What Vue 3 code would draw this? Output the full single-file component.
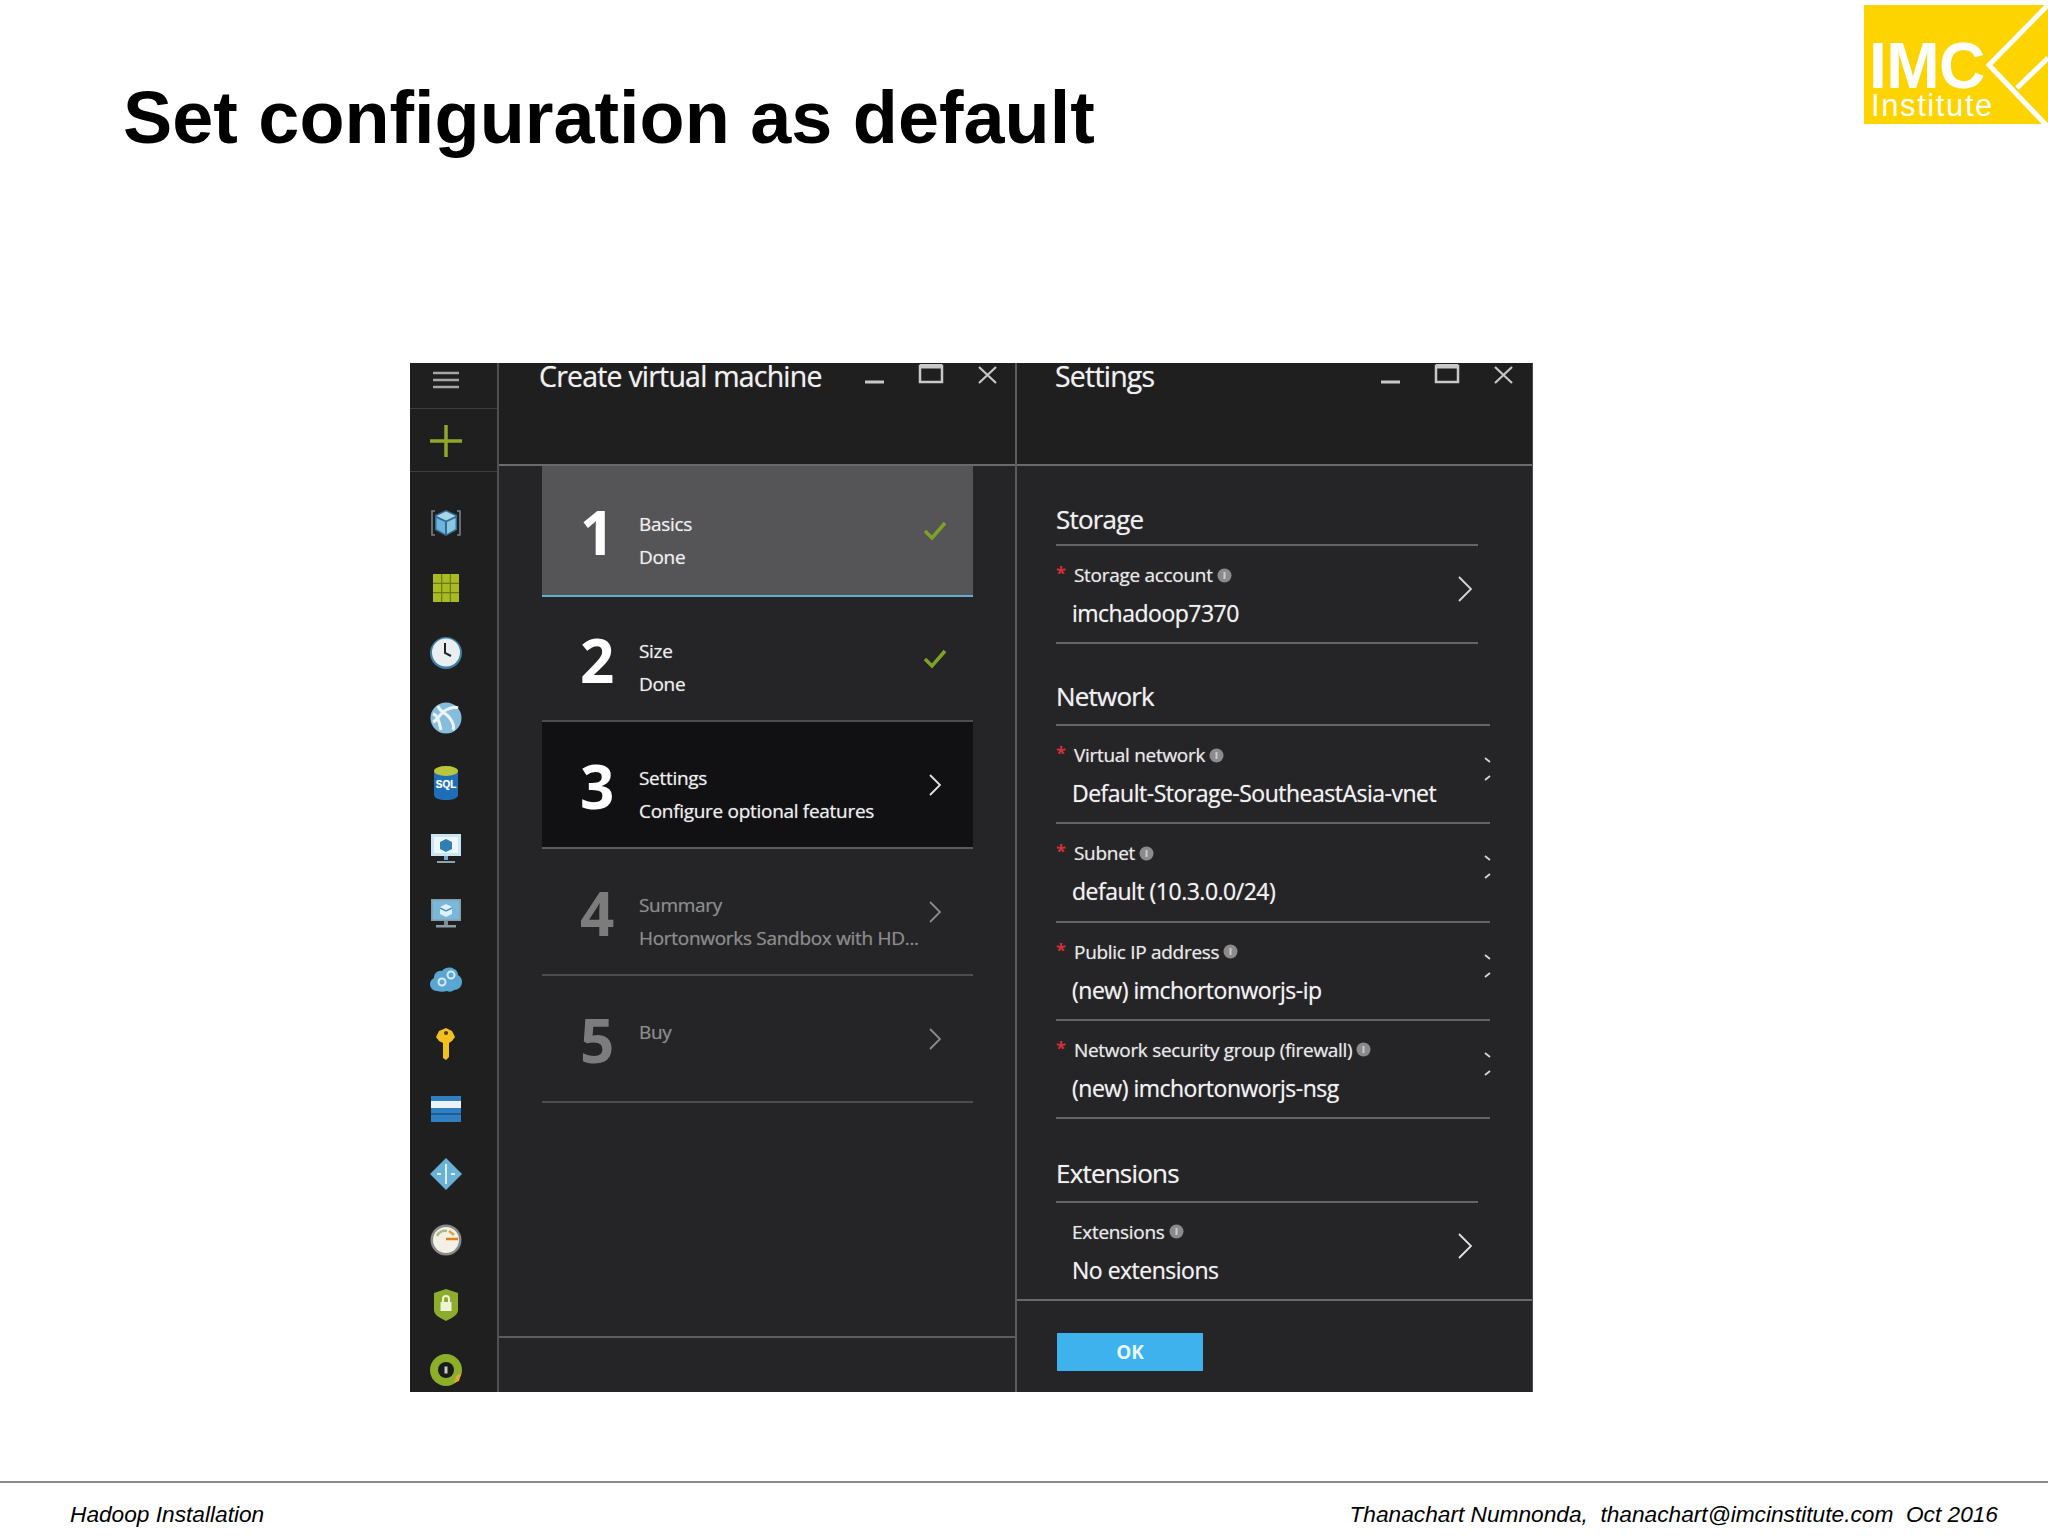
<script setup>
const steps = [
  { n: 1, title: 'Basics', sub: 'Done', cls: 'sel', icon: 'check' },
  { n: 2, title: 'Size', sub: 'Done', cls: '', icon: 'check' },
  { n: 3, title: 'Settings', sub: 'Configure optional features', cls: 'cur', icon: 'chev' },
  { n: 4, title: 'Summary', sub: 'Hortonworks Sandbox with HD...', cls: 'off', icon: 'chev' },
  { n: 5, title: 'Buy', sub: '', cls: 'off', icon: 'chev' }
]
const network = [
  { label: 'Virtual network', value: 'Default-Storage-SoutheastAsia-vnet' },
  { label: 'Subnet', value: 'default (10.3.0.0/24)' },
  { label: 'Public IP address', value: '(new) imchortonworjs-ip' },
  { label: 'Network security group (firewall)', value: '(new) imchortonworjs-nsg' }
]
</script>

<template>
  <div class="page">
    <header class="top">
      <h1 class="title">Set configuration as default</h1>
      <svg class="logo" width="184" height="119" viewBox="0 0 184 119">
        <rect width="184" height="119" fill="#fdd400" />
        <path d="M184 0 L125 60 L184 122 M153 83 L184 53" fill="none" stroke="#fff" stroke-width="5" />
        <text x="5" y="83" class="logo-big">IMC</text>
        <text x="7" y="111" class="logo-small">Institute</text>
      </svg>
    </header>

    <main class="window">
      <nav class="side">
        <div class="side-top">
          <svg width="26" height="18" viewBox="0 0 26 18"><path d="M0 2h26M0 9h26M0 16h26" stroke="#a5a5a5" stroke-width="2.5" /></svg>
        </div>
        <div class="side-add">
          <svg width="32" height="32" viewBox="0 0 32 32"><path d="M16 0v32M0 16h32" stroke="#8fa82a" stroke-width="3.5" /></svg>
        </div>
        <div class="side-list">
          <!-- cube -->
          <div class="ico"><svg width="32" height="32" viewBox="0 0 32 32">
            <path d="M5 4H2v24h3M27 4h3v24h-3" fill="none" stroke="#77808a" stroke-width="1.6" />
            <path d="M16 3l11 5v15l-11 6-11-6V8z" fill="#2f6f96" />
            <path d="M16 4.500l9.500 4.500-9.500 4.500L6.500 9z" fill="#a9d4ea" />
            <path d="M6.500 11l8.500 4v12l-8.500-5z" fill="#6fb4da" /><path d="M25.500 11L17 15v12l8.500-5z" fill="#8cc5e3" />
          </svg></div>
          <!-- grid -->
          <div class="ico"><svg width="26" height="28" viewBox="0 0 26 28">
            <rect width="26" height="28" fill="#a8bb22" />
            <path d="M8.700 0v28M17.300 0v28M0 9.300h26M0 18.600h26" stroke="#6c7a1a" stroke-width="1.200" />
          </svg></div>
          <!-- clock -->
          <div class="ico"><svg width="32" height="32" viewBox="0 0 32 32">
            <circle cx="16" cy="16" r="16" fill="#3f7fa6" /><circle cx="16" cy="15.500" r="14" fill="#e9eef1" />
            <path d="M15 6v10l6 3" fill="none" stroke="#222" stroke-width="2" />
          </svg></div>
          <!-- globe -->
          <div class="ico"><svg width="32" height="32" viewBox="0 0 32 32">
            <circle cx="16" cy="16" r="15.500" fill="#86bddc" />
            <path d="M3 20c5-2 7-9 13-12s10-3 12-2M8 4c2 6 8 7 11 11s6 9 4 13M3 12c5 1 6 8 8 16" fill="none" stroke="#eef5f9" stroke-width="3" />
          </svg></div>
          <!-- sql -->
          <div class="ico"><svg width="24" height="34" viewBox="0 0 24 34">
            <path d="M0 5v24c0 3 5 5 12 5s12-2 12-5V5z" fill="#1e6fb8" />
            <ellipse cx="12" cy="5" rx="12" ry="5" fill="#b7c63a" />
            <text x="12" y="22" class="sql">SQL</text>
          </svg></div>
          <!-- monitor light -->
          <div class="ico"><svg width="30" height="30" viewBox="0 0 30 30">
            <rect width="30" height="22" fill="#c9e6f5" /><rect x="3" y="3" width="24" height="16" fill="#eef7fb" />
            <path d="M15 5l6 3v7l-6 3-6-3V8z" fill="#2f7fb5" />
            <path d="M13 22h4v4h-4z" fill="#6fa9c8" /><path d="M6 27h18v2H6z" fill="#8aa3b0" />
          </svg></div>
          <!-- monitor blue -->
          <div class="ico"><svg width="30" height="30" viewBox="0 0 30 30">
            <rect width="30" height="22" fill="#8a9aa3" /><rect x="1.500" y="1.500" width="27" height="19" fill="#79b8da" />
            <path d="M15 5l6 3v7l-6 3-6-3V8z" fill="#dff0f8" /><path d="M9 9l6 3 6-3" fill="none" stroke="#4f95bd" stroke-width="1.500" />
            <path d="M13 22h4v4h-4z" fill="#7b8b94" /><path d="M5 26h20v2.500H5z" fill="#8e9aa1" />
          </svg></div>
          <!-- cloud gears -->
          <div class="ico"><svg width="32" height="28" viewBox="0 0 32 28">
            <path d="M7 26c-4 0-7-3-7-7 0-3 2-5 4-6 0-5 4-8 8-7 2-3 8-5 12-2 3 1 4 4 4 6 3 2 4 4 4 7 0 5-4 8-8 8-2 2-5 2-7 1-3 1-7 1-10 0z" fill="#5aa6d3" />
            <circle cx="12" cy="17" r="3.500" fill="none" stroke="#d7ebf6" stroke-width="2" /><circle cx="21" cy="10" r="3.500" fill="none" stroke="#d7ebf6" stroke-width="2" />
          </svg></div>
          <!-- key -->
          <div class="ico"><svg width="20" height="32" viewBox="0 0 20 32">
            <path d="M10 0l6 3 3 6-3 4-3 2v14l-3 3-3-2V15L3 13 0 9l3-6z" fill="#f3c11f" />
            <circle cx="10" cy="5" r="2" fill="#4a3a10" />
          </svg></div>
          <!-- card -->
          <div class="ico"><svg width="30" height="26" viewBox="0 0 30 26">
            <rect width="30" height="26" fill="#2f7fc1" /><rect y="5" width="30" height="7" fill="#eaf3fa" />
            <rect y="17" width="30" height="2" fill="#1b5f99" />
          </svg></div>
          <!-- diamond -->
          <div class="ico"><svg width="32" height="32" viewBox="0 0 32 32">
            <path d="M16 0l16 16-16 16L0 16z" fill="#69b2d6" />
            <path d="M16 6v20M7 16h4M21 16h4" stroke="#e2f1f8" stroke-width="2" />
          </svg></div>
          <!-- gauge -->
          <div class="ico"><svg width="32" height="32" viewBox="0 0 32 32">
            <circle cx="16" cy="16" r="15.500" fill="#8a8a8a" /><circle cx="16" cy="16" r="13" fill="#f3f0e4" />
            <path d="M16 15h12" stroke="#e07f22" stroke-width="2.500" />
            <path d="M7 12c2-4 6-6 10-5" fill="none" stroke="#a9b88a" stroke-width="2.500" /><path d="M19 7l5 4" stroke="#d7a24a" stroke-width="2.500" />
          </svg></div>
          <!-- shield -->
          <div class="ico"><svg width="24" height="32" viewBox="0 0 24 32">
            <path d="M12 0l12 4v17c0 5-6 8-12 11C6 29 0 26 0 21V4z" fill="#8dab2c" />
            <rect x="6.500" y="13" width="11" height="9" fill="#eef3d8" /><path d="M9 13v-3a3 3 0 0 1 6 0v3" fill="none" stroke="#eef3d8" stroke-width="2" />
          </svg></div>
          <!-- donut -->
          <div class="ico"><svg width="32" height="32" viewBox="0 0 32 32">
            <circle cx="16" cy="16" r="16" fill="#8cae28" /><path d="M26 22l5-3-2 8-5 2z" fill="#e2a63a" />
            <circle cx="16" cy="16" r="8" fill="#1b1b1c" /><rect x="14.500" y="12.500" width="3" height="7" fill="#c9c9c9" />
          </svg></div>
        </div>
      </nav>

      <section class="panel panel-steps">
        <div class="phead">
          <span class="ptitle">Create virtual machine</span>
          <svg class="ctrl" width="132" height="22" viewBox="0 0 132 22">
            <path d="M0 18h19" stroke="#c8c8c8" stroke-width="3" />
            <path d="M55 2h22v16H55z" fill="none" stroke="#c8c8c8" stroke-width="2.500" /><path d="M55 2h22" stroke="#c8c8c8" stroke-width="5" />
            <path d="M114 3l17 16M131 3l-17 16" stroke="#c8c8c8" stroke-width="2.200" />
          </svg>
        </div>
        <div class="pbody steps">
          <div v-for="s in steps" :key="s.n" class="step" :class="s.cls">
            <span class="num">{{ s.n }}</span>
            <div class="stext">
              <div>{{ s.title }}</div>
              <div class="ssub">{{ s.sub }}</div>
            </div>
            <svg v-if="s.icon === 'check'" class="sico" width="24" height="20" viewBox="0 0 24 20"><path d="M2 10l7 7L22 2" fill="none" stroke="#7fa12a" stroke-width="3.500" /></svg>
            <svg v-else class="sico" width="24" height="24" viewBox="0 0 24 24"><path d="M7 2l10 10L7 22" fill="none" :stroke="s.cls === 'off' ? '#8a8a8a' : '#e2e2e2'" stroke-width="1.800" /></svg>
          </div>
        </div>
        <div class="pfoot"></div>
      </section>

      <section class="panel panel-set">
        <div class="phead">
          <span class="ptitle">Settings</span>
          <svg class="ctrl" width="132" height="22" viewBox="0 0 132 22">
            <path d="M0 18h19" stroke="#c8c8c8" stroke-width="3" />
            <path d="M55 2h22v16H55z" fill="none" stroke="#c8c8c8" stroke-width="2.500" /><path d="M55 2h22" stroke="#c8c8c8" stroke-width="5" />
            <path d="M114 3l17 16M131 3l-17 16" stroke="#c8c8c8" stroke-width="2.200" />
          </svg>
        </div>
        <div class="pbody form">
          <div class="group short first">
            <h2 class="ghead">Storage</h2>
            <div class="row">
              <div class="rtext">
                <div class="rlabel"><i class="req">*</i>Storage account<svg class="info" width="15" height="15" viewBox="0 0 15 15"><circle cx="7.500" cy="7.500" r="7" fill="#8b8b8d" /><path d="M7.500 4v7" stroke="#c9c9c9" stroke-width="2" /></svg></div>
                <div class="rvalue">imchadoop7370</div>
              </div>
              <svg class="big" width="18" height="26" viewBox="0 0 18 26"><path d="M3 1l12 12L3 25" fill="none" stroke="#d6d6d6" stroke-width="1.800" /></svg>
            </div>
          </div>
          <div class="group net">
            <h2 class="ghead">Network</h2>
            <div v-for="r in network" :key="r.label" class="row">
              <div class="rtext">
                <div class="rlabel"><i class="req">*</i>{{ r.label }}<svg class="info" width="15" height="15" viewBox="0 0 15 15"><circle cx="7.500" cy="7.500" r="7" fill="#8b8b8d" /><path d="M7.500 4v7" stroke="#c9c9c9" stroke-width="2" /></svg></div>
                <div class="rvalue">{{ r.value }}</div>
              </div>
              <svg class="tick" width="8" height="24" viewBox="0 0 8 24"><path d="M1 1l5 4M6 19l-5 4" fill="none" stroke="#d6d6d6" stroke-width="1.800" /></svg>
            </div>
          </div>
          <div class="group short ext">
            <h2 class="ghead">Extensions</h2>
            <div class="row last">
              <div class="rtext">
                <div class="rlabel"><i class="req none"></i>Extensions<svg class="info" width="15" height="15" viewBox="0 0 15 15"><circle cx="7.500" cy="7.500" r="7" fill="#8b8b8d" /><path d="M7.500 4v7" stroke="#c9c9c9" stroke-width="2" /></svg></div>
                <div class="rvalue">No extensions</div>
              </div>
              <svg class="big" width="18" height="26" viewBox="0 0 18 26"><path d="M3 1l12 12L3 25" fill="none" stroke="#e2e2e2" stroke-width="1.800" /></svg>
            </div>
          </div>
        </div>
        <div class="sfoot"><button class="ok">OK</button></div>
      </section>
    </main>

    <footer class="foot">
      <span>Hadoop Installation</span>
      <span>Thanachart Numnonda,&nbsp; thanachart@imcinstitute.com&nbsp; Oct 2016</span>
    </footer>
  </div>
</template>

<style>
html, body { margin: 0; background: #fff; }
</style>

<style scoped>
.page { width: 2048px; height: 1536px; display: flex; flex-direction: column; background: #fff; overflow: hidden; font-family: "Liberation Sans", Arial, sans-serif; color: #000; }
.top { height: 363px; display: flex; justify-content: space-between; align-items: flex-start; flex: none; }
.title { margin: 74px 0 0 123px; font-size: 73.8px; line-height: 88px; font-weight: 700; }
.logo { margin-top: 5px; flex: none; }
.logo-big { font-family: "Liberation Sans", sans-serif; font-size: 64px; fill: #fff; font-weight: 700; letter-spacing: -0.5px; }
.logo-small { font-family: "Liberation Sans", sans-serif; font-size: 31px; fill: #fff; letter-spacing: 1.6px; }
.sql { font-family: "Liberation Sans", sans-serif; font-size: 10px; font-weight: 700; fill: #fff; text-anchor: middle; }

.window { margin-left: 410px; width: 1123px; height: 1029px; flex: none; display: flex; background: #252527; color: #eee; font-family: "Open Sans", sans-serif; overflow: hidden; text-shadow: 0 0 1px rgba(255, 255, 255, 0.55); }
.side { width: 89px; flex: none; box-sizing: border-box; border-right: 2px solid #4f4f50; background: #1f1f20; }
.side-top { height: 46px; box-sizing: border-box; border-bottom: 1px solid #3c3c3d; display: flex; align-items: center; justify-content: center; padding: 0 15px 12px 0; }
.side-add { height: 63px; box-sizing: border-box; border-bottom: 1px solid #3c3c3d; display: flex; align-items: center; justify-content: center; padding: 2px 15px 0 0; }
.side-list { padding: 18px 15px 0 0; }
.ico { height: 65.2px; display: flex; align-items: center; justify-content: center; }

.panel { display: flex; flex-direction: column; box-sizing: border-box; }
.panel-steps { width: 518px; border-right: 2px solid #5c5c5d; }
.panel-set { width: 516px; border-right: 1px solid #4a4a4b; }
.phead { height: 103px; box-sizing: border-box; flex: none; border-bottom: 2px solid #6a6a6b; display: flex; align-items: flex-start; justify-content: space-between; padding: 0 19px 0 40px; background: #1f1f20; }
.panel-steps .phead { padding-right: 18px; }
.panel-set .phead { padding-left: 38px; }
.ptitle { font-size: 28.5px; line-height: 26px; letter-spacing: -0.8px; color: #f0f0f0; white-space: nowrap; }
.ctrl { flex: none; margin-top: 1px; }
.pbody { flex: 1; min-height: 0; }
.steps { padding-left: 43px; }
.pfoot { height: 54px; flex: none; border-top: 2px solid #5c5c5d; }

.step { width: 431px; height: 127px; box-sizing: border-box; display: flex; align-items: center; border-bottom: 2px solid #4d4d4e; color: #eee; }
.step.sel { height: 131px; background: #555557; border-bottom: 2px solid #5fb0d0; }
.step.cur { background: #111113; border-bottom-color: #5c5c5d; }
.step:nth-child(2) { height: 125px; border-bottom-color: #4d4d4e; }
.step:nth-child(2) .stext { margin-top: 18px; }
.step.off { color: #8c8c8c; }
.off .stext { text-shadow: 0 0 1px rgba(160, 160, 160, 0.5); }
.num { width: 97px; flex: none; box-sizing: border-box; padding-left: 38px; margin-top: 2px; font-size: 60px; line-height: 70px; font-weight: 700; color: #fff; text-shadow: none; }
.off .num { color: #7c7c7c; }
.stext { flex: 1; min-width: 0; height: 66px; margin-top: 20px; font-size: 19px; line-height: 33px; letter-spacing: -0.3px; font-weight: 500; white-space: nowrap; }
.sico { flex: none; margin-right: 26px; }

.form { padding-left: 39px; }
.group { width: 434px; margin-top: 30px; }
.group.first { margin-top: 28px; }
.group.ext { margin-top: 32px; }
.group.short { width: 422px; }
.ghead { margin: 0; height: 52px; box-sizing: border-box; line-height: 44px; border-bottom: 2px solid #646465; font-size: 26px; font-weight: 400; letter-spacing: -0.8px; color: #f0f0f0; }
.first .ghead { line-height: 50px; }
.row { height: 98.2px; box-sizing: border-box; display: flex; align-items: center; justify-content: space-between; border-bottom: 2px solid #646465; }
.row.last { border-bottom: 0; height: 96px; }
.rtext { height: 100%; padding-top: 14px; box-sizing: border-box; min-width: 0; }
.rlabel { display: flex; align-items: center; height: 30px; font-size: 19px; letter-spacing: -0.3px; font-weight: 500; color: #e8e8e8; white-space: nowrap; }
.req { width: 18px; flex: none; font-style: normal; font-weight: 700; color: #d4303a; font-size: 18px; line-height: 16px; align-self: flex-start; margin-top: 5px; text-shadow: none; }
.req.none { width: 16px; }
.info { margin-left: 4px; flex: none; }
.rvalue { margin-top: 8px; padding-left: 16px; height: 30px; line-height: 30px; font-size: 23px; letter-spacing: -0.5px; font-weight: 500; color: #f2f2f2; white-space: nowrap; }
.big { margin: 0 4px 10px 0; flex: none; }
.tick { margin: 0 -2px 10px 0; flex: none; }

.sfoot { height: 93px; flex: none; box-sizing: border-box; border-top: 2px solid #6a6a6b; padding: 32px 0 0 40px; }
.ok { display: block; width: 146px; height: 38px; padding: 0; border: 0; border-radius: 0; background: #3db2ec; color: #e8f6fd; font-family: "Open Sans", sans-serif; font-weight: 700; font-size: 19px; }

.foot { margin-top: 89px; flex: 1; border-top: 2px solid #8a8a8a; padding: 17px 50px 0 70px; display: flex; justify-content: space-between; font-style: italic; font-size: 22.7px; line-height: 28px; }
</style>
